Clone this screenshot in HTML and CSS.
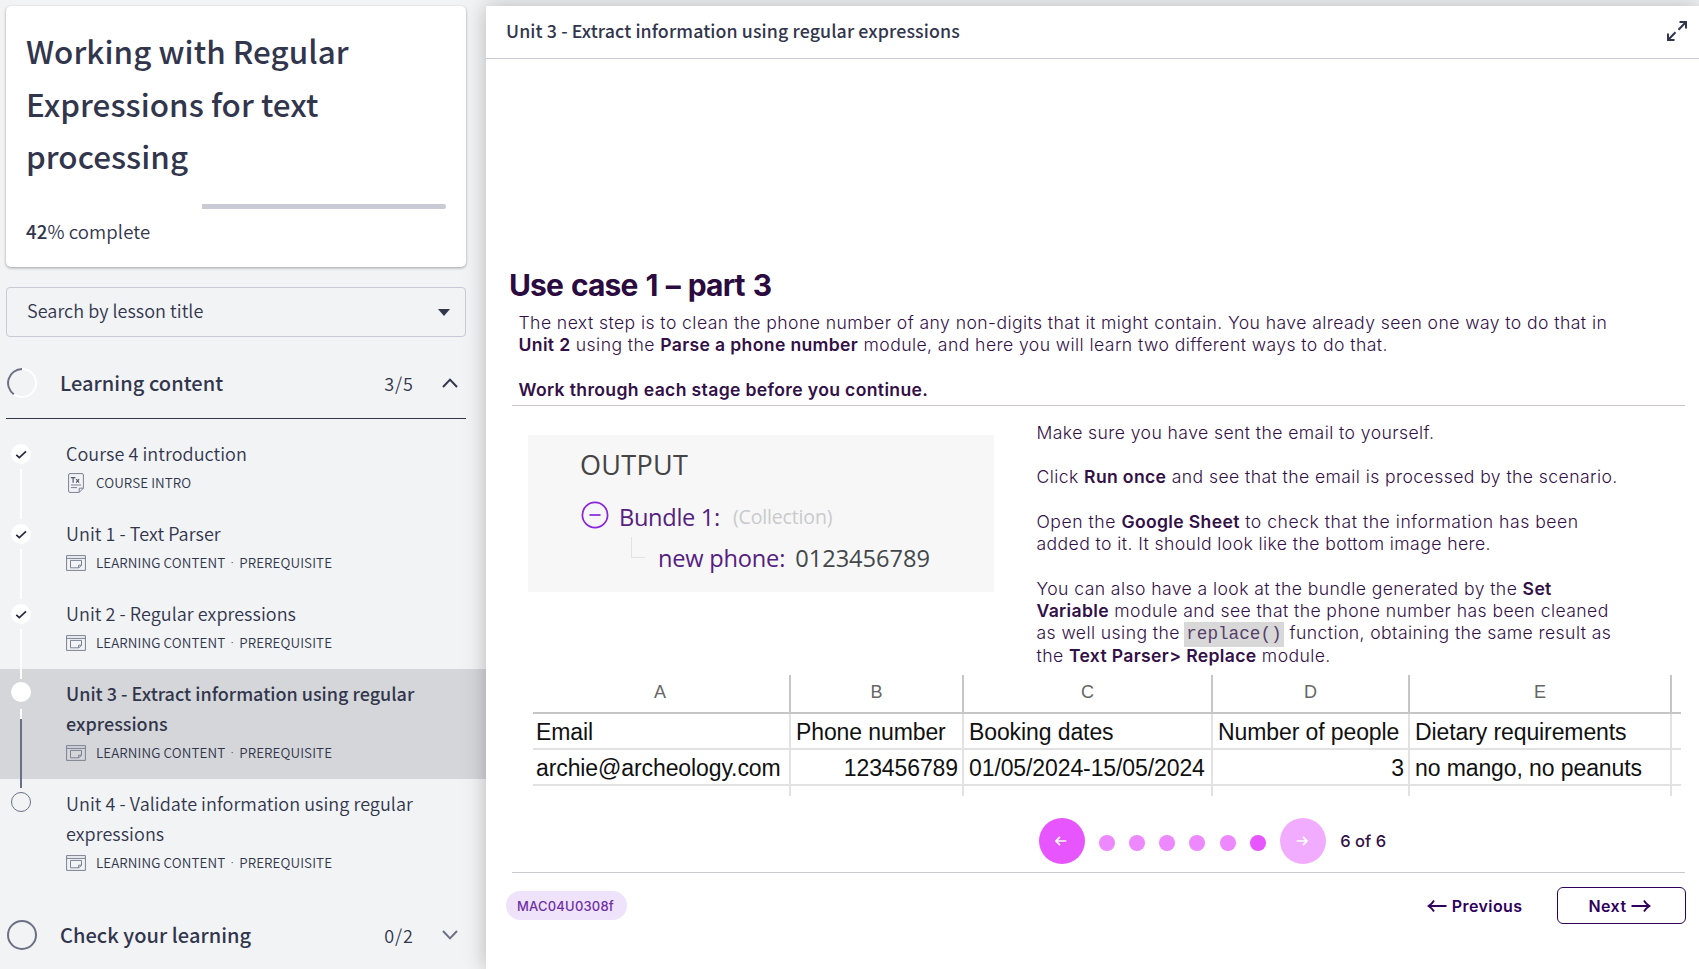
FILE: index.html
```html
<!DOCTYPE html>
<html lang="en">
<head>
<meta charset="utf-8">
<title>Working with Regular Expressions for text processing</title>
<link rel="stylesheet" href="styles.css">
</head>
<body>
<svg class="sprite" aria-hidden="true">
  <symbol id="i-content" viewBox="0 0 20 16"><path d="M.6.6h18.800v14.800H.6zM.6 3.400h18.800M4.500 5.400h11v5l-2.600 2.400H4.500zM12.600 12.600v-2.400h2.900"/></symbol>
  <symbol id="i-check" viewBox="0 0 20 20"><path d="M5.300 10.800l3 2.800 6.700-6.300"/></symbol>
</svg>
<div class="app">
  <aside class="sidebar">
    <section class="course">
      <h1><span>Working with Regular</span><span>Expressions for text</span><span>processing</span></h1>
      <div class="progress"><div class="progress-rest"></div></div>
      <p class="complete"><b>42</b>% complete</p>
    </section>
    <div class="search"><span class="search-text">Search by lesson title</span><svg width="12" height="7" viewBox="0 0 12 7"><path d="M0 0h12L6 7z" fill="#32364d"/></svg></div>
    <div class="group open">
      <svg class="ring" width="30" height="30" viewBox="0 0 30 30"><circle cx="15" cy="15" r="14" stroke="#fff"/><path d="M15 1A14 14 0 0 0 6.800 26.300" stroke="#6b7085"/></svg>
      <h2>Learning content</h2><span class="count">3/5</span>
      <svg class="chev" width="16" height="10" viewBox="0 0 16 10"><path d="M1 9l7-7.400L15 9" stroke="#32364d"/></svg>
    </div>
    <ul class="lessons">
      <li><div class="rail"><svg class="dot done"><use href="#i-check"/></svg><i class="line"></i></div>
        <div class="lesson"><h3>Course 4 introduction</h3><p class="meta"><svg class="doc" width="16" height="20" viewBox="0 0 16 20"><path d="M.6 2A1.400 1.400 0 0 1 2 .6h12A1.400 1.400 0 0 1 15.400 2v13.200l-4.200 4.200H2A1.400 1.400 0 0 1 .6 18zM11.200 19.400v-4.200h4.200M3 12h10M3 14.600h6"/><path class="tx" d="M2.800 4.700h4.600M5.100 4.700v5M8.200 6.200l2.900 3.500M11.100 6.200l-2.900 3.500"/></svg><span>COURSE INTRO</span></p></div></li>
      <li><div class="rail"><svg class="dot done"><use href="#i-check"/></svg><i class="line"></i></div>
        <div class="lesson"><h3>Unit 1 - Text Parser</h3><p class="meta"><svg class="win"><use href="#i-content"/></svg><span>LEARNING CONTENT</span><em>·</em><span>PREREQUISITE</span></p></div></li>
      <li><div class="rail"><svg class="dot done"><use href="#i-check"/></svg><i class="line"></i></div>
        <div class="lesson"><h3>Unit 2 - Regular expressions</h3><p class="meta"><svg class="win"><use href="#i-content"/></svg><span>LEARNING CONTENT</span><em>·</em><span>PREREQUISITE</span></p></div></li>
      <li class="active"><div class="rail"><i class="dot now"></i><i class="line ahead"></i></div>
        <div class="lesson"><h3>Unit 3 - Extract information using regular<br>expressions</h3><p class="meta"><svg class="win"><use href="#i-content"/></svg><span>LEARNING CONTENT</span><em>·</em><span>PREREQUISITE</span></p></div></li>
      <li><div class="rail"><i class="dot todo"></i></div>
        <div class="lesson"><h3>Unit 4 - Validate information using regular<br>expressions</h3><p class="meta"><svg class="win"><use href="#i-content"/></svg><span>LEARNING CONTENT</span><em>·</em><span>PREREQUISITE</span></p></div></li>
    </ul>
    <div class="group closed">
      <svg class="ring" width="30" height="30" viewBox="0 0 30 30"><circle cx="15" cy="15" r="14" stroke="#6b7085"/></svg>
      <h2>Check your learning</h2><span class="count">0/2</span>
      <svg class="chev" width="16" height="10" viewBox="0 0 16 10"><path d="M1 1l7 7.400L15 1" stroke="#6b7085"/></svg>
    </div>
  </aside>
  <main class="panel">
    <header class="bar"><span>Unit 3 - Extract information using regular expressions</span>
      <svg width="20" height="20" viewBox="0 0 20 20"><path d="M12.500 1H19v6.500M19 1l-7.500 7.800M7.500 19H1v-6.500M1 19l7.500-7.800"/></svg></header>
    <div class="slide">
      <h2 class="slide-title">Use case 1 – part 3</h2>
      <div class="intro">
        <p>The next step is to clean the phone number of any non-digits that it might contain. You have already seen one way to do that in</p>
        <p><b>Unit 2</b> using the <b>Parse a phone number</b> module, and here you will learn two different ways to do that.</p>
        <p class="gap"><b>Work through each stage before you continue.</b></p>
      </div>
      <div class="cols">
        <div class="output">
          <div class="o-title">OUTPUT</div>
          <div class="o-bundle"><svg width="28" height="28" viewBox="0 0 28 28"><circle cx="14" cy="14" r="12.600"/><path d="M8.500 14h11"/></svg><span>Bundle 1:</span><span class="o-kind">(Collection)</span></div>
          <div class="o-phone"><i class="elbow"></i><span>new phone:</span><span class="o-value">0123456789</span></div>
        </div>
        <div class="steps">
          <p>Make sure you have sent the email to yourself.</p>
          <p class="gap">Click <b>Run once</b> and see that the email is processed by the scenario.</p>
          <p class="gap wide">Open the <b>Google Sheet</b> to check that the information has been</p>
          <p>added to it. It should look like the bottom image here.</p>
          <p class="gap">You can also have a look at the bundle generated by the <b>Set</b></p>
          <p><b>Variable</b> module and see that the phone number has been cleaned</p>
          <p>as well using the <code>replace()</code> function, obtaining the same result as</p>
          <p>the <b>Text Parser&gt; Replace</b> module.</p>
        </div>
      </div>
      <div class="sheet">
        <div class="h">A</div><div class="h">B</div><div class="h">C</div><div class="h">D</div><div class="h">E</div><div class="h x"></div>
        <div class="f">Email</div><div>Phone number</div><div>Booking dates</div><div>Number of people</div><div>Dietary requirements</div><div class="x"></div>
        <div class="f">archie@archeology.com</div><div class="r">123456789</div><div>01/05/2024-15/05/2024</div><div class="r">3</div><div>no mango, no peanuts</div><div class="x"></div>
        <div class="e"></div><div class="e"></div><div class="e"></div><div class="e"></div><div class="e"></div><div class="e x"></div>
      </div>
      <div class="pager">
        <span class="pg"><svg width="12" height="10" viewBox="0 0 12 10"><path d="M11.300 5H1.300M5 .8L1 5l4 4.200"/></svg></span>
        <i class="p"></i><i class="p"></i><i class="p"></i><i class="p"></i><i class="p"></i><i class="p on"></i>
        <span class="pg off"><svg width="12" height="10" viewBox="0 0 12 10"><path d="M.7 5h10M7 .8L11 5 7 9.200"/></svg></span>
        <span class="of">6 of 6</span>
      </div>
      <footer class="foot">
        <span class="tag">MAC04U0308f</span>
        <span class="prev"><svg width="20" height="14" viewBox="0 0 20 14"><path d="M19.500 7H1.500M7 1.500Q5.500 4.500 1.500 7 5.500 9.500 7 12.500"/></svg><span>Previous</span></span>
        <span class="next"><span>Next</span><svg width="20" height="14" viewBox="0 0 20 14"><path d="M.5 7h18M13 1.500Q14.500 4.500 18.500 7 14.500 9.500 13 12.500"/></svg></span>
      </footer>
    </div>
  </main>
</div>
</body>
</html>
```
FILE: styles.css
```css
* { box-sizing: border-box; margin: 0; padding: 0; }
body { width: 1699px; height: 969px; overflow: hidden; background: #f1f3f5; color: #32364d; font-family: "Noto Sans CJK SC", "Noto Sans", sans-serif; }
svg { fill: none; display: block; flex: none; }
.sprite { position: absolute; width: 0; height: 0; }
i, em { font-style: normal; display: block; }
p { white-space: nowrap; }
.app { display: flex; height: 969px; padding-top: 6px; }

/* Sidebar */
.sidebar { width: 486px; flex: none; }
.course { margin-left: 6px; width: 460px; height: 261px; background: #fff; border-radius: 5px; box-shadow: 0 1px 3px rgba(0,0,0,.35); padding: 19px 20px 0; }
h1 { font-size: 31.400px; line-height: 52.500px; font-weight: 500; letter-spacing: .05px; }
h1 span { display: table; white-space: nowrap; }
.progress { margin-top: 21.500px; display: flex; justify-content: flex-end; }
.progress-rest { width: 244px; height: 5px; background: #c9cad6; border-radius: 0 3px 3px 0; }
.complete { margin-top: 7px; font-size: 18.600px; line-height: 30px; font-weight: 350; letter-spacing: .1px; }
.complete b { font-weight: 500; }
.search { margin: 20px 0 0 6px; width: 460px; height: 50px; border: 1px solid #c9cad6; border-radius: 4px; display: flex; align-items: center; justify-content: space-between; padding: 0 15px 0 20px; font-size: 18px; font-weight: 350; letter-spacing: .04px; }
.search-text { padding-bottom: 4px; }
.group { margin-left: 6px; width: 460px; display: flex; align-items: center; padding: 0 8px 0 1px; height: 68px; }
.group.open { margin-top: 14px; border-bottom: 1px solid #32364d; padding-bottom: 4px; }
.group.closed { margin-top: 12px; }
.ring { stroke-width: 2; }
.group h2 { font-size: 20px; font-weight: 500; margin-left: 23px; line-height: 30px; letter-spacing: .06px; }
.count { margin-left: auto; font-size: 18px; font-weight: 350; letter-spacing: 1px; }
.chev { stroke-width: 2; margin-left: 28px; }
.lessons { list-style: none; padding-top: 10px; }
.lessons li { display: flex; height: 80px; }
.lessons li:nth-child(n+4) { height: 110px; }
.active { background: #d5d6da; }
.rail { width: 66px; padding: 15px 0 0 11px; }
li:nth-child(n+4) .rail { padding-top: 13px; }
.dot { width: 20px; height: 20px; border-radius: 50%; }
.done { background: #fff; stroke: #24283c; stroke-width: 1.700; }
.now { background: #fff; }
.todo { border: 1.300px solid #6b7085; }
.line { position: relative; z-index: 1; width: 2px; height: 50px; margin: 5px 0 0 9px; background: #fff; }
.line.ahead { height: 79px; margin-top: 7px; background: linear-gradient(#fff 10px, #6b7085 10px); }
.lesson { padding-top: 9px; }
h3 { font-size: 18px; line-height: 30px; font-weight: 350; letter-spacing: .05px; }
.active h3 { font-weight: 500; letter-spacing: 0; }
.meta { display: flex; align-items: center; font-size: 13.400px; line-height: 29px; font-weight: 350; letter-spacing: .1px; }
.meta svg { stroke: #7b8093; stroke-width: 1; margin-right: 10px; }
.meta .tx { stroke: #555a70; stroke-width: 1.200; }
.win { width: 20px; height: 16px; }
.meta .doc { margin: 0 12px 0 2px; }
.meta em { width: 14px; text-align: center; font-family: "Noto Sans", sans-serif; }

/* Lesson panel */
.panel { flex: 1; background: #fff; box-shadow: 0 0 20px rgba(0,0,0,.25); }
.bar { height: 53px; border-bottom: 1px solid #c9cad6; padding: 0 12px 4px 20px; display: flex; align-items: center; justify-content: space-between; font-size: 17.800px; font-weight: 500; letter-spacing: .1px; }
.bar svg { stroke: #32364d; stroke-width: 2; margin-top: 2px; }
.slide { padding: 207px 14px 0 26px; font-family: Inter, sans-serif; color: #331047; }
.slide-title { font-size: 30px; line-height: 38px; height: 40px; font-weight: 650; margin-left: -3px; color: #2b0b40; letter-spacing: -.880px; word-spacing: 1.800px; }
.intro { font-size: 17.600px; line-height: 22.200px; font-weight: 300; padding: 6px 0 0 6.500px; height: 100px; border-bottom: 1px solid #ccc8cd; letter-spacing: .42px; }
.slide b { font-weight: 600; letter-spacing: .34px; }
.gap { margin-top: 22.200px; }
.cols { display: flex; height: 269px; }
.output { margin: 29px 0 0 16px; width: 466px; height: 157px; background: #f7f7f7; font-family: "Open Sans", sans-serif; padding: 14px 0 0 53px; }
.o-title { font-size: 27px; line-height: 32px; color: #444; letter-spacing: .3px; margin-left: -1px; }
.o-bundle { display: flex; align-items: center; font-size: 23.600px; line-height: 32px; margin-top: 20px; color: #55207f; letter-spacing: -.3px; }
.o-bundle svg { stroke: #8a25dc; stroke-width: 1.700; margin: -4px 10px 0 0; }
.o-kind { font-size: 19.500px; color: #c9cacc; margin-left: 13px; letter-spacing: -.150px; }
.o-phone { display: flex; font-size: 23.600px; line-height: 32px; margin-top: 9px; color: #55207f; letter-spacing: -.2px; }
.elbow { width: 14px; height: 21px; border: solid #e3e3e3; border-width: 0 0 1.500px 1.500px; margin: -5px 13px 0 50px; }
.o-value { color: #43474b; margin-left: 10px; letter-spacing: 0; }
.steps { margin-left: 42.500px; padding-top: 16px; font-size: 17.600px; line-height: 22.300px; font-weight: 300; letter-spacing: .41px; }
.steps .wide { letter-spacing: .520px; }
code { display: inline-block; width: 100px; padding: 0 2px; margin: -3px 0 -2px -1px; line-height: 25px; font-family: "Liberation Mono", monospace; font-size: 17.700px; letter-spacing: 0; color: #55406a; background: #d8d8d8; }

/* Spreadsheet excerpt */
.sheet { display: grid; grid-template-columns: 258px 173px 249px 197px 262px 9px; grid-template-rows: 39px 36px 36px 10px; margin-left: 21px; font-family: "Liberation Sans", Arial, sans-serif; color: #111; font-size: 23px; width: 1148px; letter-spacing: -.1px; }
.sheet > div { border-right: 2px solid #e2e2e2; border-bottom: 2px solid #e2e2e2; padding: 0 4px 0 5px; line-height: 36px; white-space: nowrap; }
.sheet > .f { padding-left: 3px; }
.sheet > .h { border-color: #c6c6c6; text-align: center; color: #666; font-size: 18px; line-height: 34px; padding: 0 2px; }
.sheet > .h:first-child { padding-right: 4px; }
.sheet > .x { border-right: 0; }
.sheet > .e { border-bottom: 0; }
.sheet > .r { text-align: right; }

/* Pager and footer */
.pager { display: flex; align-items: center; margin: 22px 0 0 527px; height: 46px; }
.pg { width: 46px; height: 46px; border-radius: 50%; background: #e755ff; display: flex; align-items: center; justify-content: center; padding-right: 2px; }
.pg svg { stroke: #fff; stroke-width: 1.700; }
.pg.off { background: #f2acff; }
.p { width: 16px; height: 16px; border-radius: 50%; background: #ee88ff; margin: 4px 14.300px 0 0; }
.pg + .p { margin-left: 13.500px; }
.p.on { background: #e755ff; }
.of { margin-left: 14px; font-size: 16.500px; font-weight: 500; }
.foot { border-top: 1px solid #ccc8cd; margin-top: 8px; display: flex; padding-top: 14px; height: 60px; font-size: 16px; font-weight: 600; color: #30005c; letter-spacing: .42px; }
.tag { width: 121px; height: 29px; margin: 4px 0 0 -6px; border-radius: 15px; background: #efe3fb; color: #6e2fa5; font-size: 13px; font-weight: 500; letter-spacing: .2px; display: flex; align-items: center; padding-left: 11px; }
.prev { margin-left: auto; display: flex; align-items: center; gap: 5px; height: 37px; }
.next { margin-left: 34.500px; margin-right: -1px; width: 129px; height: 37px; border: 1.500px solid #30005c; border-radius: 6px; display: flex; align-items: center; gap: 5px; padding-left: 30.500px; }
.prev svg, .next svg { stroke: #30005c; stroke-width: 1.800; }
```
